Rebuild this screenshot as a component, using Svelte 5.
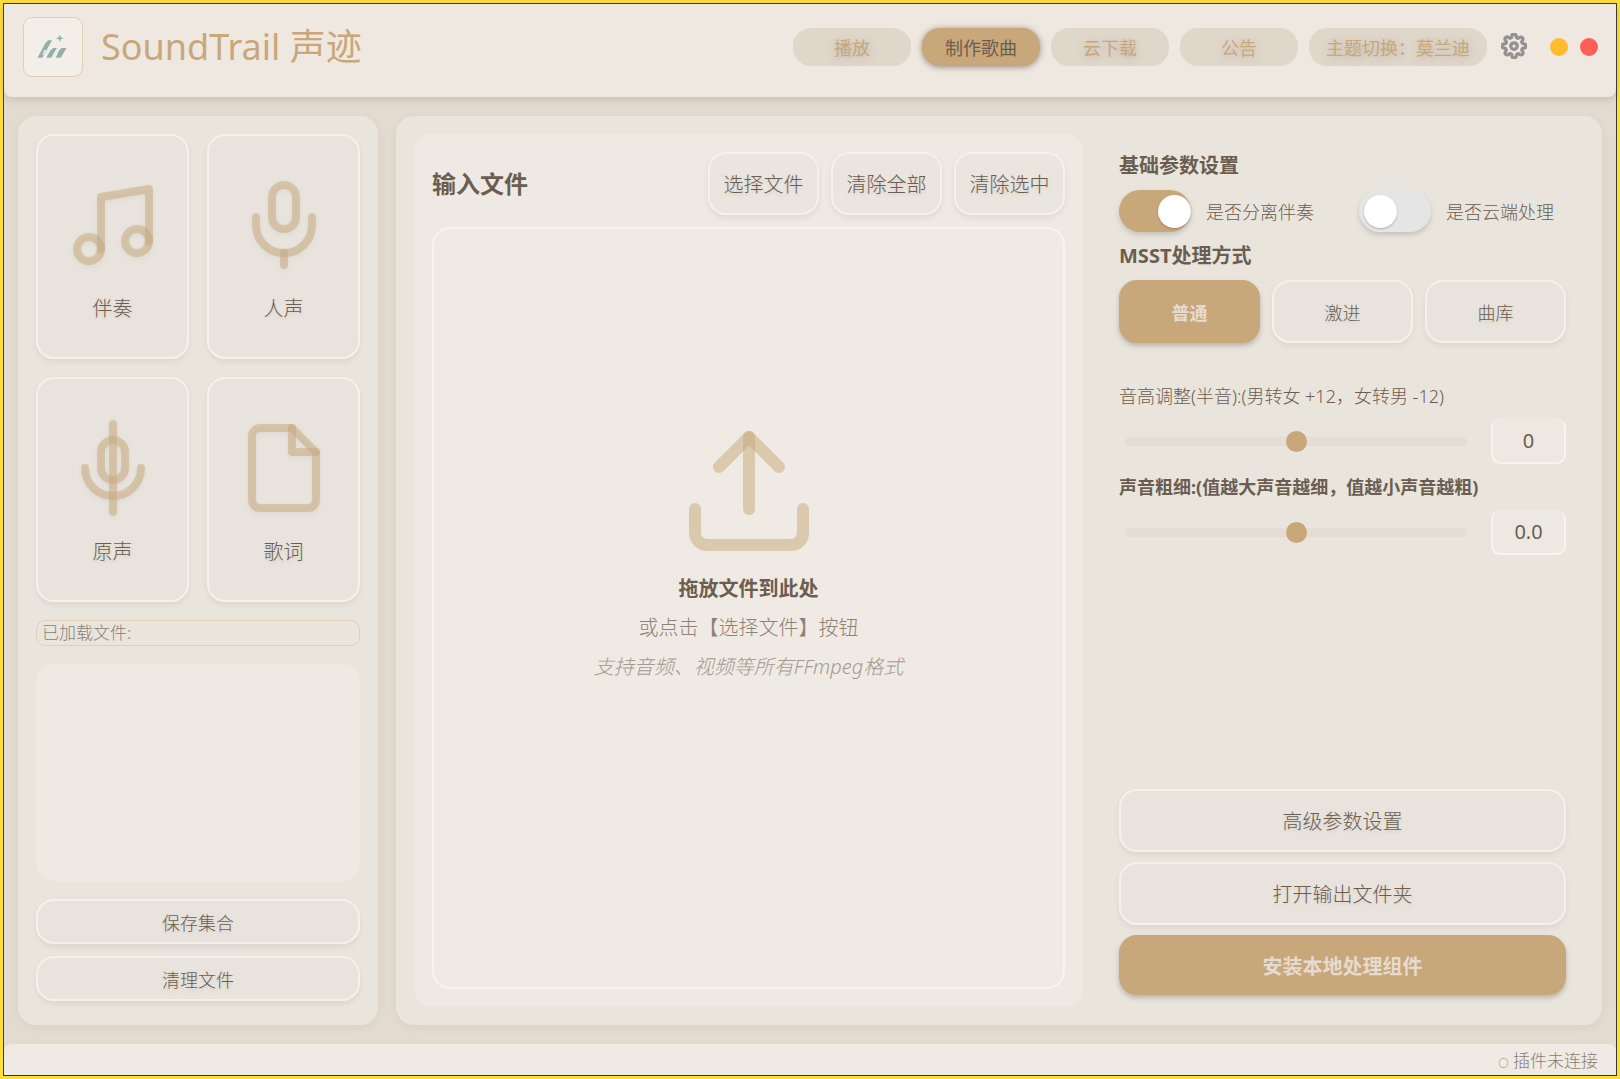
<script>
    let activeNav = '制作歌曲';
    let mode = '普通';
    let separate = true;
    let cloud = false;
    let pitch = 0;
    let tone = 0;

    const navItems = ['播放', '制作歌曲', '云下载', '公告'];
    const modes = ['普通', '激进', '曲库'];
    const cards = [
        { label: '伴奏', icon: 'music' },
        { label: '人声', icon: 'mic' },
        { label: '原声', icon: 'origin' },
        { label: '歌词', icon: 'file' }
    ];
</script>

<div class="window">
    <div class="app">
        <header>
            <div class="logo">
                <svg viewBox="0 0 60 60" width="58" height="58" aria-hidden="true">
                    <path d="M14 41h5l10-18h-4l-3 3zM23 41h5l6-10h-4l-3 3zM33 41h5l6-10h-5l-3 3zM21 33h3l-3 5h-2z" />
                    <path d="M37 17l1 3 3 1-3 1-1 3-1-3-3-1 3-1z" />
                </svg>
            </div>
            <h1>SoundTrail 声迹</h1>
            <nav>
                {#each navItems as item}
                    <button class="pill" class:active={activeNav === item} on:click={() => (activeNav = item)}>{item}</button>
                {/each}
                <button class="pill theme">主题切换：莫兰迪</button>
            </nav>
            <button class="gear" aria-label="设置">
                <svg viewBox="0 0 24 24" width="26" height="26">
                    <circle cx="12" cy="12" r="3" />
                    <path d="M19.4 15a1.65 1.65 0 0 0 .33 1.82l.06.06a2 2 0 1 1-2.83 2.83l-.06-.06a1.65 1.65 0 0 0-2.8 1.17V21a2 2 0 0 1-4 0v-.09a1.65 1.65 0 0 0-2.9-1.26l-.06.06a2 2 0 1 1-2.83-2.83l.06-.06a1.65 1.65 0 0 0-1.17-2.8H3a2 2 0 0 1 0-4h.09a1.65 1.65 0 0 0 1.26-2.9l-.06-.06a2 2 0 1 1 2.83-2.83l.06.06a1.65 1.65 0 0 0 2.8-1.17V3a2 2 0 0 1 4 0v.09a1.65 1.65 0 0 0 2.82 1.26l.06-.06a2 2 0 1 1 2.83 2.83l-.06.06a1.65 1.65 0 0 0 1.17 2.8H21a2 2 0 0 1 0 4h-.09a1.65 1.65 0 0 0-1.51 1z" />
                </svg>
            </button>
            <button class="dot minimize" aria-label="最小化"></button>
            <button class="dot close" aria-label="关闭"></button>
        </header>

        <main>
            <aside class="panel sidebar">
                <div class="cards">
                    {#each cards as card}
                        <button class="soft card">
                            <svg class="line-icon" viewBox="0 0 24 24" width="96" height="96" aria-hidden="true">
                                {#if card.icon === 'music'}
                                    <path d="M9 18V5l12-2v13" />
                                    <circle cx="6" cy="18" r="3" />
                                    <circle cx="18" cy="16" r="3" />
                                {:else if card.icon === 'mic'}
                                    <rect x="9" y="2" width="6" height="11" rx="3" />
                                    <path d="M19 10v2a7 7 0 0 1-14 0v-2" />
                                    <path d="M12 19v3" />
                                {:else if card.icon === 'origin'}
                                    <rect x="9" y="5" width="6" height="10" rx="3" />
                                    <path d="M5 12a7 7 0 0 0 14 0" />
                                    <path d="M12 1v22" />
                                {:else}
                                    <path d="M14 2H6a2 2 0 0 0-2 2v16a2 2 0 0 0 2 2h12a2 2 0 0 0 2-2V8z" />
                                    <path d="M14 2v6h6" />
                                {/if}
                            </svg>
                            <span>{card.label}</span>
                        </button>
                    {/each}
                </div>
                <div class="loaded">已加载文件:</div>
                <div class="file-list"></div>
                <div class="side-actions">
                    <button class="soft">保存集合</button>
                    <button class="soft">清理文件</button>
                </div>
            </aside>

            <div class="panel content">
                <section class="files">
                    <div class="files-head">
                        <h2>输入文件</h2>
                        <button class="soft">选择文件</button>
                        <button class="soft">清除全部</button>
                        <button class="soft">清除选中</button>
                    </div>
                    <div class="drop">
                        <svg class="line-icon" viewBox="0 0 24 24" width="144" height="144" aria-hidden="true">
                            <path d="M21 15v4a2 2 0 0 1-2 2H5a2 2 0 0 1-2-2v-4" />
                            <path d="M17 8l-5-5-5 5" />
                            <path d="M12 3v12" />
                        </svg>
                        <p class="drop-title">拖放文件到此处</p>
                        <p class="drop-sub">或点击【选择文件】按钮</p>
                        <p class="drop-hint">支持音频、视频等所有FFmpeg格式</p>
                    </div>
                </section>

                <section class="settings">
                    <h3>基础参数设置</h3>
                    <div class="toggles">
                        <label><input type="checkbox" class="toggle" bind:checked={separate} />是否分离伴奏</label>
                        <label><input type="checkbox" class="toggle" bind:checked={cloud} />是否云端处理</label>
                    </div>
                    <h3>MSST处理方式</h3>
                    <div class="modes">
                        {#each modes as item}
                            <button class="soft" class:gold={mode === item} on:click={() => (mode = item)}>{item}</button>
                        {/each}
                    </div>

                    <label class="field pitch" for="pitch">音高调整(半音):(男转女 +12，女转男 -12)</label>
                    <div class="slider-row">
                        <input id="pitch" type="range" min="-12" max="12" bind:value={pitch} />
                        <input class="value" type="text" aria-label="音高" value={pitch} readonly />
                    </div>
                    <label class="field strong" for="tone">声音粗细:(值越大声音越细，值越小声音越粗)</label>
                    <div class="slider-row">
                        <input id="tone" type="range" min="-1" max="1" step="0.1" bind:value={tone} />
                        <input class="value" type="text" aria-label="声音粗细" value={tone.toFixed(1)} readonly />
                    </div>

                    <div class="actions">
                        <button class="soft">高级参数设置</button>
                        <button class="soft">打开输出文件夹</button>
                        <button class="soft gold install">安装本地处理组件</button>
                    </div>
                </section>
            </div>
        </main>

        <footer><span class="status">○</span> 插件未连接</footer>
    </div>
</div>

<style>
    :global(body) {
        margin: 0;
    }

    .window {
        --gold: #c8a77a;
        --text: #6b5d50;
        box-sizing: border-box;
        min-height: 100vh;
        display: flex;
        background: #3a3730;
        border: 3px solid #fddf38;
        padding: 1px;
        color: var(--text);
        font-family: 'Noto Sans', 'Noto Sans CJK SC', sans-serif;
        font-size: 18px;
        font-weight: 300;
    }

    .window * {
        box-sizing: border-box;
    }

    .app {
        flex: 1;
        min-width: 0;
        display: flex;
        flex-direction: column;
        background: #e4dbd0;
    }

    h1, h2, h3, p {
        margin: 0;
    }

    button, input {
        font-family: inherit;
        font-size: inherit;
        font-weight: inherit;
        color: inherit;
    }

    button {
        cursor: pointer;
        padding: 0;
    }

    header {
        position: relative;
        display: flex;
        align-items: center;
        padding: 13px 18px 20px 19px;
        background: #efe8e1;
        border-radius: 0 0 8px 8px;
        box-shadow: 0 2px 9px rgba(107, 93, 80, 0.25);
    }

    .logo {
        width: 60px;
        height: 60px;
        border: 1px solid #e0cfb8;
        border-radius: 9px;
        background: #f3efe8;
    }

    .logo svg {
        display: block;
        fill: #93afad;
    }

    h1 {
        margin-left: 18px;
        font-size: 36px;
        line-height: 60px;
        font-weight: 400;
        color: var(--gold);
        white-space: nowrap;
    }

    nav {
        display: flex;
        gap: 11px;
        margin-left: auto;
    }

    .pill {
        width: 118px;
        height: 38px;
        border: none;
        border-radius: 18px;
        background: #e0d7cb;
        color: var(--gold);
        font-weight: 400;
        text-shadow: 0 2px 8px rgba(107, 93, 80, 0.3);
        white-space: nowrap;
    }

    .pill.active {
        background: var(--gold);
        color: var(--text);
        text-shadow: none;
        box-shadow: 0 1px 6px rgba(60, 50, 40, 0.5);
    }

    .theme {
        width: 178px;
    }

    .gear {
        display: flex;
        margin: 0 31px 2px 14px;
        border: none;
        background: none;
    }

    .gear svg {
        fill: none;
        stroke: #919191;
        stroke-width: 3;
        margin-right: -8px;
    }

    .dot {
        width: 18px;
        height: 18px;
        border: none;
        border-radius: 50%;
    }

    .minimize {
        background: #febc2e;
        margin-right: 12px;
    }

    .close {
        background: #ff5f57;
    }

    main {
        flex: 1;
        display: flex;
        gap: 18px;
        padding: 19px 14px;
    }

    .panel {
        border-radius: 18px;
        background: #e9e5dd;
        box-shadow: 0 2px 9px rgba(107, 93, 80, 0.08);
        padding: 18px;
    }

    .soft {
        border: 2px solid #f4f1ed;
        border-radius: 18px;
        background: rgba(232, 227, 222, 0.6);
        box-shadow: 0 3px 5px rgba(107, 93, 80, 0.1);
        text-shadow: 0 2px 3px rgba(107, 93, 80, 0.15);
        white-space: nowrap;
    }

    .gold {
        border-color: var(--gold);
        background: var(--gold);
        color: #e6dbd0;
        font-weight: 700;
        text-shadow: none;
        box-shadow: 0 3px 5px rgba(107, 93, 80, 0.35);
    }

    .line-icon {
        fill: none;
        stroke: var(--gold);
        stroke-opacity: 0.5;
        stroke-width: 2;
        stroke-linecap: round;
        stroke-linejoin: round;
    }

    .sidebar {
        width: 360px;
        display: flex;
        flex-direction: column;
        gap: 18px;
        padding-bottom: 24px;
    }

    .cards {
        display: grid;
        grid-template-columns: 1fr 1fr;
        gap: 18px;
    }

    .card {
        display: flex;
        flex-direction: column;
        align-items: center;
        height: 225px;
        padding-top: 41px;
        gap: 22px;
        font-size: 20px;
        line-height: 27px;
    }

    .card .line-icon {
        filter: drop-shadow(0 2px 2px rgba(107, 93, 80, 0.15));
    }

    .loaded {
        border: 1px solid #e2cfb8;
        border-radius: 9px;
        padding: 0 5px;
        font-size: 17px;
        line-height: 24px;
        color: #8a7e72;
    }

    .file-list {
        flex: 1;
        border-radius: 18px;
        background: #eee9e2;
    }

    .side-actions {
        display: grid;
        gap: 12px;
    }

    .side-actions button {
        height: 45px;
    }

    .content {
        flex: 1;
        min-width: 0;
        display: flex;
        gap: 36px;
        padding-right: 36px;
    }

    .files {
        flex: 3;
        display: flex;
        flex-direction: column;
        gap: 12px;
        padding: 18px;
        border-radius: 18px;
        background: #eee9e2;
    }

    .files-head {
        display: flex;
        align-items: center;
        gap: 12px;
        font-size: 20px;
    }

    .files-head button {
        width: 111px;
        height: 63px;
    }

    h2 {
        flex: 1;
        font-size: 24px;
        line-height: 32px;
    }

    .drop {
        flex: 1;
        display: flex;
        flex-direction: column;
        align-items: center;
        justify-content: center;
        padding-bottom: 112px;
        border: 2px solid #f7f4f0;
        border-radius: 18px;
        background: #efeae3;
        font-size: 20px;
        line-height: 39px;
    }

    .drop svg {
        margin-bottom: 6px;
    }

    .drop-title {
        font-weight: 700;
    }

    .drop-sub {
        color: #8d8276;
    }

    .drop-hint {
        color: #a3998f;
        font-style: italic;
    }

    .settings {
        width: 447px;
        display: flex;
        flex-direction: column;
        gap: 10px;
        padding: 18px 0 12px;
    }

    h3 {
        font-size: 20px;
        line-height: 28px;
    }

    .toggles {
        display: flex;
    }

    .toggles label {
        width: 240px;
        display: flex;
        align-items: center;
        gap: 15px;
        white-space: nowrap;
    }

    .toggles label:last-child {
        width: auto;
    }

    .toggle {
        appearance: none;
        width: 72px;
        height: 42px;
        margin: 0;
        padding: 0 5px;
        display: flex;
        align-items: center;
        border-radius: 21px;
        background: #e5e5e5;
        box-shadow: 0 3px 5px rgba(107, 93, 80, 0.25);
    }

    .toggle::before {
        content: '';
        width: 33px;
        height: 33px;
        border-radius: 50%;
        background: #fff;
        box-shadow: 0 1px 2px rgba(60, 50, 40, 0.3);
    }

    .toggle:checked {
        justify-content: flex-end;
        padding-right: 0;
        background: var(--gold);
    }

    .modes {
        display: grid;
        grid-template-columns: repeat(3, 1fr);
        gap: 12px;
    }

    .modes button {
        height: 63px;
    }

    .field {
        line-height: 26px;
        white-space: nowrap;
    }

    .pitch {
        margin-top: 30px;
    }

    .strong {
        font-weight: 700;
    }

    .slider-row {
        display: flex;
        align-items: center;
        padding-left: 6px;
        gap: 24px;
    }

    input[type='range'] {
        appearance: none;
        flex: 1;
        min-width: 0;
        height: 9px;
        margin: 0;
        border-radius: 5px;
        background: #e4ddd3;
    }

    input[type='range']::-webkit-slider-thumb {
        appearance: none;
        width: 21px;
        height: 21px;
        border-radius: 50%;
        background: var(--gold);
    }

    .value {
        width: 75px;
        height: 45px;
        padding: 0;
        border: 2px solid #f7f4f0;
        border-top: none;
        border-radius: 9px;
        background: #ede8e1;
        font-size: 20px;
        font-weight: 400;
        text-align: center;
    }

    .actions {
        display: grid;
        gap: 10px;
        margin-top: auto;
        font-size: 20px;
    }

    .actions button {
        height: 63px;
    }

    .actions .install {
        height: 60px;
    }

    footer {
        height: 31px;
        padding-right: 18px;
        background: #efeae3;
        border-radius: 8px 8px 0 0;
        font-size: 17px;
        line-height: 34px;
        text-align: right;
        color: #8a7e72;
    }

    .status {
        font-size: 10px;
        font-weight: 700;
    }
</style>
